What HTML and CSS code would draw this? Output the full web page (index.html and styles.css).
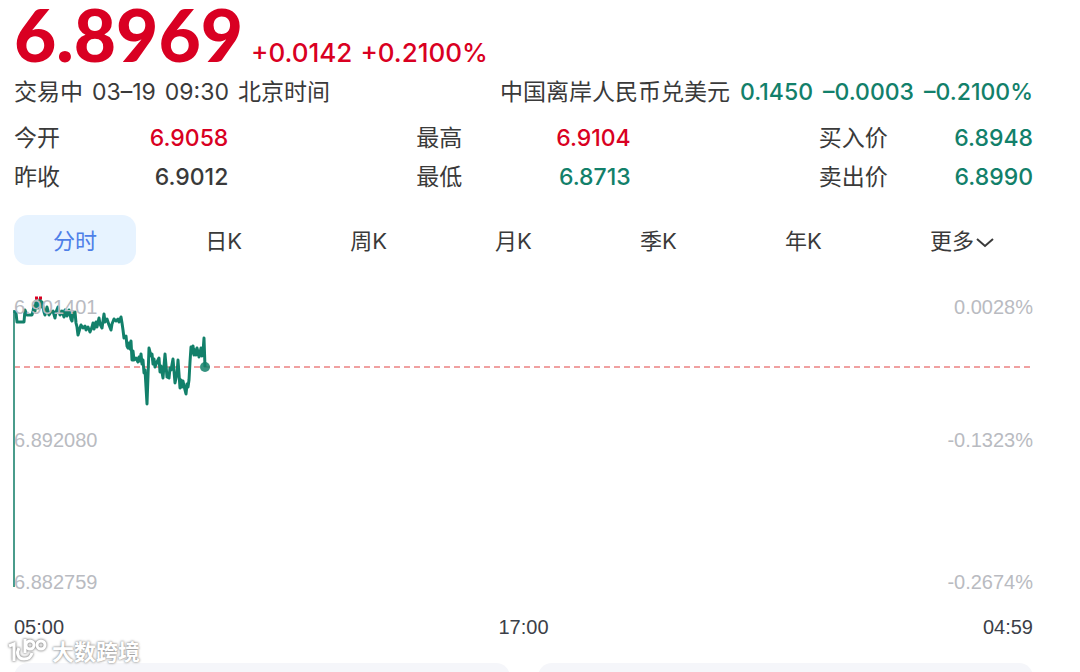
FILE: index.html
```html
<!DOCTYPE html>
<html lang="zh-CN">
<head>
    <meta charset="UTF-8">
    <meta name="viewport" content="width=device-width, initial-scale=1.0">
    <title>离岸人民币</title>
    <link rel="stylesheet" href="styles.css">
</head>
<body>
    <main class="quote">
        <div class="price-row up">
            <span class="price">6.8969</span>
            <span class="change">+0.0142</span>
            <span class="change">+0.2100%</span>
        </div>

        <div class="status-row">
            <div class="status">
                <span>交易中</span>
                <span>03–19</span>
                <span>09:30</span>
                <span>北京时间</span>
            </div>
            <div class="inverse">
                <span>中国离岸人民币兑美元</span>
                <span class="num down">0.1450</span>
                <span class="num down">–0.0003</span>
                <span class="num down">–0.2100%</span>
            </div>
        </div>

        <dl class="stats">
            <div class="stat"><dt>今开</dt><dd class="up">6.9058</dd></div>
            <div class="stat"><dt>最高</dt><dd class="up">6.9104</dd></div>
            <div class="stat"><dt>买入价</dt><dd class="down">6.8948</dd></div>
            <div class="stat"><dt>昨收</dt><dd>6.9012</dd></div>
            <div class="stat"><dt>最低</dt><dd class="down">6.8713</dd></div>
            <div class="stat"><dt>卖出价</dt><dd class="down">6.8990</dd></div>
        </dl>

        <nav class="tabs">
            <button type="button" class="tab active">分时</button>
            <button type="button" class="tab">日K</button>
            <button type="button" class="tab">周K</button>
            <button type="button" class="tab">月K</button>
            <button type="button" class="tab">季K</button>
            <button type="button" class="tab">年K</button>
            <button type="button" class="tab">更多<svg class="arrow" viewBox="0 0 18 12" aria-hidden="true"><path d="M1 2l8 7 8-7"/></svg></button>
        </nav>

        <div class="chart">
            <svg class="plot" viewBox="0 0 1019 300" aria-hidden="true">
                <path class="base-line" d="M0 77H1019"/>
                <path class="open-line" d="M0 20V297"/>
                <path class="trend" d="M0 21L2 23 3 32H10L11 20 13 25 18 25 19 21 20 16 21 21 22 11 24 18 26 9 27 17 28 12 30 22 31 25 33 17 35 25 37 22 39 21 41 28 42 22 44 17 46 25 48 21 50 27 51 20 53 26 55 20 57 29 58 31 59 23 61 22 62 33 63 37 64 45 66 38 67 35 69 38 71 36 72 40 74 37 76 42 78 37 79 33 80 39 82 32 83 37 85 28 86 34 88 38 90 24 91 32 93 29 95 35 97 40 98 34 100 29 102 31 104 29 105 32 107 27 108 33 109 40 110 48 112 46 113 56 114 58 115 53 116 59 117 51 118 70 119 61 120 70 122 68 124 72 125 67 126 71 127 64 128 74 129 70 130 83 131 80 133 114 134 86 135 58 137 66 138 64 139 74 140 69 141 77 143 72 145 68 146 82 147 76 149 88 151 64 153 87 155 88 156 78 157 80 159 69 161 93 163 83 164 70 166 98 167 90 168 97 169 91 170 96 172 104 173 94 174 97 175 90 176 72 177 57 178 63 179 56 180 65 181 60 182 65 183 58 184 62 185 67 187 58 188 66 189 62 190 48 191 77"/>
                <path class="peak" d="M21 8h3M25 8h3"/>
                <circle class="now" cx="191" cy="77" r="5"/>
            </svg>
            <div class="scale">
                <span>6.901401</span><span>0.0028%</span>
                <span>6.892080</span><span>-0.1323%</span>
                <span>6.882759</span><span>-0.2674%</span>
            </div>
        </div>
        <div class="times">
            <span>05:00</span>
            <span>17:00</span>
            <span>04:59</span>
        </div>

        <div class="cards">
            <div class="card"></div>
            <div class="card"></div>
        </div>
    </main>

    <div class="watermark">
        <svg class="mark" viewBox="0 0 40 30" aria-hidden="true">
            <path d="M1 9l5-2v17M11 11c-3 5-1 11 5 11 4 0 7-2 8-6"/>
            <path d="M17 2v14"/>
            <circle cx="22" cy="8" r="4"/>
            <circle cx="33" cy="8" r="4"/>
        </svg>
        <span>大数跨境</span>
    </div>
</body>
</html>
```
FILE: styles.css
```css
* {
    box-sizing: border-box;
}

body {
    margin: 0;
    background: #fff;
    color: #3a3a3a;
    font-family: Inter, "Noto Sans CJK SC", sans-serif;
    font-size: 23px;
}

.quote {
    height: 100vh;
    padding: 0 47px 0 14px;
    overflow: hidden;
}

.up {
    color: #d90022;
}

.down {
    color: #12806a;
}

.price-row {
    display: flex;
    align-items: baseline;
    gap: 8px;
    height: 72px;
}

.price {
    font-family: Lato, sans-serif;
    font-size: 73px;
    font-weight: 900;
    line-height: 72px;
    margin-top: -2px;
}

.change {
    font-size: 26px;
    font-weight: 500;
}

.status-row {
    display: flex;
    justify-content: space-between;
    line-height: 40px;
}

.status {
    display: flex;
    gap: 9px;
}

.inverse {
    display: flex;
    gap: 10px;
}

.num {
    font-weight: 500;
}

.stats {
    display: grid;
    grid-template-columns: repeat(3, 1fr);
    column-gap: 188px;
    margin: 7px 0 18px;
    line-height: 39px;
}

.stat {
    display: flex;
    justify-content: space-between;
}

.stat dd {
    margin: 0;
    font-weight: 500;
}

.tabs {
    display: flex;
    justify-content: space-between;
}

.tab {
    height: 50px;
    padding: 0 39px 3px;
    border: 0;
    border-radius: 14px;
    background: none;
    color: #3a3a3a;
    font: inherit;
    font-size: 22px;
    white-space: nowrap;
    cursor: pointer;
}

.tab.active {
    background: #e7f3ff;
    color: #4e7fe8;
}

.arrow {
    width: 18px;
    height: 12px;
    margin-left: 2px;
    fill: none;
    stroke: #3a3a3a;
    stroke-width: 2;
}

.chart {
    position: relative;
    margin-top: 25px;
    font-family: "Liberation Sans", Arial, sans-serif;
}

.plot {
    display: block;
    width: 100%;
    fill: none;
    overflow: visible;
}

.base-line {
    stroke: #f0a0a0;
    stroke-width: 2;
    stroke-dasharray: 6 4;
}

.open-line {
    stroke: #4a9c8b;
    stroke-width: 2;
}

.trend {
    stroke: #12806a;
    stroke-width: 3;
    stroke-linejoin: round;
}

.peak {
    stroke: #d90022;
    stroke-width: 3;
}

.now {
    fill: #12806a;
    fill-opacity: 0.85;
}

.scale {
    position: absolute;
    inset: 7px 0 auto;
    display: grid;
    grid-template-columns: 1fr 1fr;
    grid-template-rows: 133px 142px 20px;
    color: #b9bbc1;
    font-size: 20px;
    line-height: 20px;
}

.scale span:nth-child(even) {
    text-align: right;
}

.times {
    display: flex;
    justify-content: space-between;
    margin-top: 23px;
    color: #3c3f48;
    font-family: "Liberation Sans", Arial, sans-serif;
    font-size: 20px;
    line-height: 28px;
}

.cards {
    display: grid;
    grid-template-columns: 1fr 1fr;
    gap: 28px;
    margin-top: 22px;
}

.card {
    height: 60px;
    border-radius: 14px;
    background: #f5f6fa;
}

.watermark {
    position: absolute;
    left: 8px;
    top: 636px;
    display: flex;
    align-items: center;
    gap: 4px;
    color: #fff;
    font-size: 22px;
    font-weight: 700;
    line-height: 32px;
    text-shadow: 0 0 2px #888, 0 0 3px #aaa;
}

.mark {
    width: 40px;
    height: 30px;
    fill: none;
    stroke: #fff;
    stroke-width: 3;
    filter: drop-shadow(0 0 1px #888) drop-shadow(0 0 1px #bbb);
}
```
